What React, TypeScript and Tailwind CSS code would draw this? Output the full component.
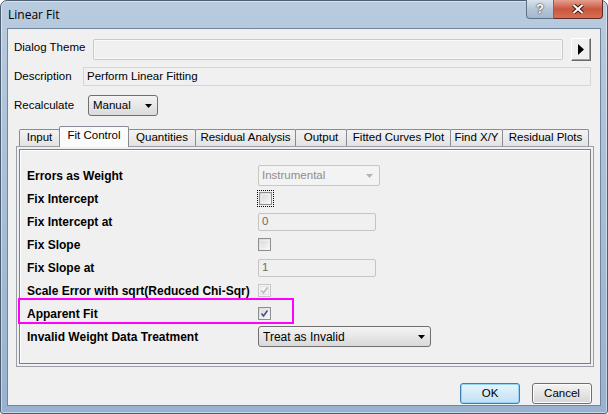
const TABS = [
  { label: "Input", w: 41 },
  { label: "Fit Control", w: 70, active: true },
  { label: "Quantities", w: 68 },
  { label: "Residual Analysis", w: 101 },
  { label: "Output", w: 52 },
  { label: "Fitted Curves Plot", w: 105 },
  { label: "Find X/Y", w: 53 },
  { label: "Residual Plots", w: 87 },
];

function Arrow({ color = "#000" }: { color?: string }) {
  return (
    <svg width="7" height="4" viewBox="0 0 7 4">
      <path d="M0 0h7L3.5 4z" fill={color} />
    </svg>
  );
}

function Check({ color }: { color: string }) {
  return (
    <svg width="9" height="9" viewBox="0 0 9 9" className="absolute left-[1px] top-[1px]">
      <path d="M1.5 4.5l2 2.5L7.5 1.5" fill="none" stroke={color} strokeWidth={1.5} />
    </svg>
  );
}

function Checkbox({ checked, disabled }: { checked?: boolean; disabled?: boolean }) {
  return (
    <div
      className={
        "relative w-[13px] h-[13px] border " +
        (disabled ? "border-[#c6c6c6] bg-[#f4f4f4]" : "border-[#8e8f8f] bg-gradient-to-br from-[#d6d6d6] to-[#f8f8f8]")
      }
    >
      <div className={"absolute inset-[1px] border " + (disabled ? "border-[#e4e4e4]" : "border-[#f4f4f4]/60")} />
      {checked && <Check color={disabled ? "#b9b9b9" : "#3b4f8c"} />}
    </div>
  );
}

function Field({ value, w }: { value: string; w: string }) {
  return (
    <div className={`${w} h-[18px] border border-[#c4c4c4] rounded-[2px] bg-[#f0f0f0] flex items-center pl-[3px] text-[11.5px] text-[#6d6d6d]`}>
      {value}
    </div>
  );
}

function Row({ label, children }: { label: string; children?: React.ReactNode }) {
  return (
    <div className="flex items-center h-[23px]">
      <div className="w-[238px] pl-[7px] font-bold text-[12px] text-black">{label}</div>
      {children}
    </div>
  );
}

export default function App() {
  return (
    <div className="w-[608px] h-[414px] relative bg-white font-['Liberation_Sans',Arial,sans-serif]">
      <div className="w-full h-full rounded-t-[7px] rounded-b-[3px] border border-[#4d5e72] bg-gradient-to-b from-[#b9cbde] via-[#a7bed7] to-[#98b2cf] flex flex-col px-[6px] pb-[7px] shadow-[inset_0_0_0_1px_rgba(255,255,255,0.45)]">
        {/* title bar */}
        <div className="h-[27px] flex items-center pl-[1px] text-[12px] text-black font-['Open_Sans',sans-serif]">
          Linear Fit
        </div>
        <div className="absolute top-0 right-[5px] flex h-[19px]">
          <div className="w-[28px] h-full border border-[#5f7186] border-t-0 rounded-bl-[4px] bg-gradient-to-b from-[#dbe3ec] via-[#b7c6d7] to-[#a4b7cc] flex items-center justify-center text-white font-bold text-[13px] [text-shadow:0_0_2px_#2d3a48,0_0_1px_#2d3a48]">
            ?
          </div>
          <div className="w-[49px] h-full border border-[#5e2a26] border-t-0 border-l-0 rounded-br-[4px] bg-gradient-to-b from-[#e6a08f] via-[#c9563f] to-[#d86e52] flex items-center justify-center">
            <svg width="12" height="10" viewBox="0 0 12 10">
              <path d="M1.5 1l9 8M10.5 1l-9 8" stroke="#3b1a16" strokeWidth={4} />
              <path d="M1.5 1l9 8M10.5 1l-9 8" stroke="#fff" strokeWidth={2} />
            </svg>
          </div>
        </div>

        {/* client area */}
        <div className="flex-1 border border-[#71869c] bg-[#f0f0f0] flex flex-col text-[11.5px] text-black">
          {/* Dialog Theme */}
          <div className="mt-[9px] h-[23px] flex items-start">
            <div className="w-[85px] pl-[6px] pt-[1px]">Dialog Theme</div>
            <div className="mt-[1px] w-[470px] h-[21px] border border-[#c9c9c9] rounded-[2px] bg-[#f0f0f0] shadow-[inset_0_0_0_1px_#fafafa]" />
            <div className="ml-[8px] w-[20px] h-[23px] bg-[#f0f0f0] border border-t-white border-l-white border-r-[#696969] border-b-[#696969] shadow-[inset_-1px_-1px_0_#a0a0a0] flex items-center justify-center">
              <svg width="6" height="11" viewBox="0 0 6 11">
                <path d="M0 0l6 5.5L0 11z" fill="#000" />
              </svg>
            </div>
          </div>
          {/* Description */}
          <div className="mt-[6px] h-[19px] flex items-center">
            <div className="w-[75px] pl-[6px]">Description</div>
            <div className="w-[508px] h-[19px] border border-[#d5d5d5] bg-[#f0f0f0] flex items-center pl-[3px]">
              Perform Linear Fitting
            </div>
          </div>
          {/* Recalculate */}
          <div className="mt-[9px] h-[21px] flex items-center">
            <div className="w-[80px] pl-[6px]">Recalculate</div>
            <div className="w-[70px] h-[21px] border border-[#707070] rounded-[3px] bg-gradient-to-b from-[#f4f4f4] to-[#dadada] flex items-center justify-between pl-[4px] pr-[5px]">
              <span>Manual</span>
              <Arrow />
            </div>
          </div>

          {/* tabs */}
          <div className="mt-[10px] ml-[11px] h-[20px] flex items-end text-[11.5px]">
            {TABS.map((t, i) => (
              <div
                key={t.label}
                style={{ width: t.w }}
                className={
                  "flex items-center justify-center border border-b-0 border-[#898c95] rounded-t-[2px] " +
                  (i > 0 ? "-ml-px " : "") +
                  (t.active
                    ? "h-[21px] -mb-px relative z-10 bg-[#fbfbfb] pb-[2px]"
                    : "h-[17px] bg-gradient-to-b from-[#f3f3f3] to-[#e3e3e3]")
                }
              >
                {t.label}
              </div>
            ))}
          </div>
          <div className="ml-[8px] w-[578px] h-[221px] border border-[#9a9ea6] bg-[#f0f0f0] p-[2px]">
            <div className="relative w-full h-full border border-[#7e7e7e] shadow-[inset_1px_1px_0_#fff] pt-[14px]">
              <Row label="Errors as Weight">
                <div className="w-[122px] h-[21px] border border-[#c7c7c7] rounded-[2px] bg-[#f3f3f3] flex items-center justify-between pl-[3px] pr-[6px] text-[#8d8d8d]">
                  <span>Instrumental</span>
                  <Arrow color="#b4b4b4" />
                </div>
              </Row>
              <Row label="Fix Intercept">
                <div className="-ml-px border border-dotted border-black p-px">
                  <Checkbox />
                </div>
              </Row>
              <Row label="Fix Intercept at">
                <Field value="0" w="w-[118px]" />
              </Row>
              <Row label="Fix Slope">
                <Checkbox />
              </Row>
              <Row label="Fix Slope at">
                <Field value="1" w="w-[118px]" />
              </Row>
              <Row label="Scale Error with sqrt(Reduced Chi-Sqr)">
                <Checkbox checked disabled />
              </Row>
              <Row label="Apparent Fit">
                <Checkbox checked />
              </Row>
              <Row label="Invalid Weight Data Treatment">
                <div className="w-[173px] h-[21px] border border-[#707070] rounded-[3px] bg-gradient-to-b from-[#f4f4f4] to-[#d9d9d9] flex items-center justify-between pl-[4px] pr-[5px] text-[12px]">
                  <span>Treat as Invalid</span>
                  <Arrow />
                </div>
              </Row>
              <div className="absolute left-[-2px] top-[148px] w-[276px] h-[26px] border-2 border-[#ff00ff]" />
            </div>
          </div>

          {/* buttons */}
          <div className="mt-[16px] flex justify-end gap-[12px] pr-[8px]">
            <div className="w-[60px] h-[21px] rounded-[3px] border border-[#3c7fb1] bg-gradient-to-b from-[#e8f5fc] to-[#bfe0f4] shadow-[inset_0_0_0_1px_#98d5f5] flex items-center justify-center">
              OK
            </div>
            <div className="w-[60px] h-[21px] rounded-[3px] border border-[#707070] bg-gradient-to-b from-[#f4f4f4] to-[#d6d6d6] shadow-[inset_0_0_0_1px_#fcfcfc] flex items-center justify-center">
              Cancel
            </div>
          </div>
        </div>
      </div>
    </div>
  );
}
